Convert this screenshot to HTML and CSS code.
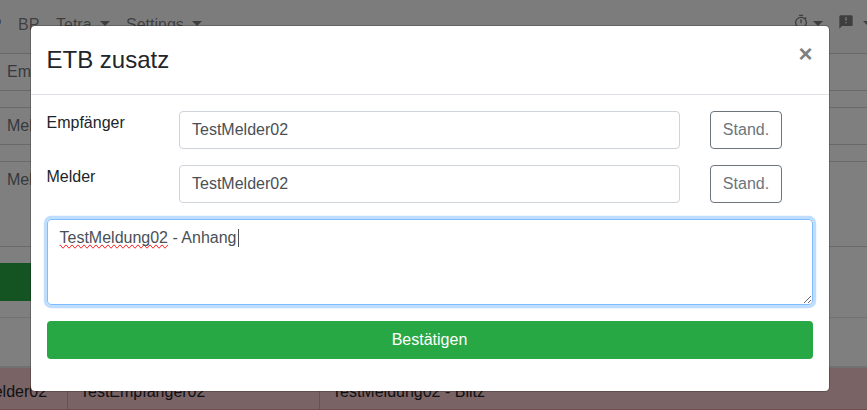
FILE: index.html
```html
<!DOCTYPE html>
<html lang="de">
<head>
<meta charset="utf-8">
<title>ETB zusatz</title>
<link rel="stylesheet" href="styles.css">
</head>
<body>
<div class="page">
  <nav class="navbar">
    <span class="nav-p">P</span>
    <span class="nav-br">BP</span>
    <span class="nav-tetra">Tetra <i class="caret"></i></span>
    <span>Settings <i class="caret"></i></span>
    <span class="nav-right">
      <svg class="icon" viewBox="0 0 24 24"><path d="M15 1H9v2h6V1zm-4 13h2V8h-2v6zm8.030-6.610l1.420-1.420c-.43-.51-.9-.99-1.410-1.410l-1.420 1.420A8.962 8.962 0 0 0 12 4a9 9 0 1 0 7.030 3.390zM12 20c-3.870 0-7-3.130-7-7s3.130-7 7-7 7 3.130 7 7-3.130 7-7 7z"/></svg>
      <i class="caret caret-near"></i>
      <svg class="icon icon-feedback" viewBox="0 0 24 24"><path d="M20 2H4c-1.100 0-2 .9-2 2v18l4-4h14c1.100 0 2-.9 2-2V4c0-1.100-.9-2-2-2zm-7 12h-2v-2h2v2zm0-4h-2V5h2v5z"/></svg>
      <i class="caret caret-last"></i>
    </span>
  </nav>
  <div class="field">Empfänger</div>
  <div class="field">Melder</div>
  <div class="field field-area">Meldung</div>
  <div class="submit"></div>
  <div class="rule"></div>
  <div class="table-row">
    <div class="cell cell-melder">TestMelder02</div>
    <div class="cell cell-empf">TestEmpfänger02</div>
    <div class="cell">TestMeldung02 - Blitz</div>
  </div>
</div>
<div class="backdrop">
  <section class="modal">
    <header class="modal-header">
      <h4>ETB zusatz</h4>
      <span class="close">×</span>
    </header>
    <div class="modal-body">
      <div class="row">
        <span class="label">Empfänger</span>
        <div class="input">TestMelder02</div>
        <div class="btn-outline">Stand.</div>
      </div>
      <div class="row">
        <span class="label">Melder</span>
        <div class="input">TestMelder02</div>
        <div class="btn-outline">Stand.</div>
      </div>
      <div class="textarea"><span class="misspelled">TestMeldung02</span> - Anhang<i class="cursor"></i></div>
      <div class="btn-confirm">Bestätigen</div>
    </div>
  </section>
</div>
</body>
</html>
```
FILE: styles.css
```css
* { box-sizing: border-box; }
body {
  margin: 0;
  height: 410px;
  overflow: hidden;
  position: relative;
  background: #fff;
  color: #212529;
  font: 16px/24px "Liberation Sans", Arial, sans-serif;
}
.page { height: 410px; overflow: hidden; }
.navbar {
  display: flex;
  height: 53px;
  padding-top: 13px;
  background: #f8f9fa;
  color: rgba(0, 0, 0, .5);
  white-space: nowrap;
}
.nav-p { width: 27px; margin-left: -9px; }
.nav-br { width: 38px; }
.nav-tetra { width: 70px; }
.caret {
  display: inline-block;
  margin-left: 4px;
  vertical-align: 4px;
  border-top: 5px solid;
  border-left: 5px solid transparent;
  border-right: 5px solid transparent;
}
.nav-right {
  display: flex;
  align-items: flex-start;
  margin-left: auto;
  width: 74px;
}
.icon { width: 16px; height: 16px; flex: none; margin-top: 1px; fill: currentColor; }
.caret-near { margin: 8px 0 0 4px; }
.icon-feedback { margin-left: 15px; }
.caret-last { margin: 8px 0 0 9px; flex: none; }
.field {
  height: 38px;
  margin: 0 -6px 16px;
  padding: 6px 12px;
  border: 1px solid #ced4da;
  color: #6c757d;
}
.field-area { height: 86px; }
.submit { width: 420px; height: 38px; background: #28a745; }
.rule { height: 51px; margin-top: 16px; border-top: 1px solid rgba(0, 0, 0, .1); border-bottom: 2px solid #dee2e6; }
.table-row { display: flex; height: 42px; background: #f5c6cb; border-bottom: 1px solid #ed969e; }
.cell { padding: 12px; }
.cell + .cell { border-left: 1px solid #ed969e; }
.cell-melder { width: 112px; margin-left: -45px; padding-left: 0; text-indent: -4px; }
.cell-empf { width: 252px; }
.backdrop {
  position: absolute;
  inset: 0;
  padding: 25px 37px 0 30px;
  background: rgba(0, 0, 0, .5);
}
.modal {
  width: 800px;
  height: 367px;
  background: #fff;
  background-clip: padding-box;
  border: 1px solid rgba(0, 0, 0, .2);
  border-radius: 5px;
}
.modal-header {
  display: flex;
  justify-content: space-between;
  height: 69px;
  padding: 16px 16.5px 16px 15.5px;
  border-bottom: 1px solid #dee2e6;
}
h4 { margin: 0; font-size: 24px; line-height: 36px; font-weight: 500; }
.close { font-size: 24px; line-height: 24px; font-weight: 700; color: #7f7f7f; }
.modal-body { padding: 16px; }
.row { display: flex; height: 38px; margin-bottom: 16px; }
.label { width: 132px; text-indent: -.5px; }
.input, .textarea {
  padding: 6px 12px;
  border: 1px solid #ced4da;
  border-radius: 4px;
  color: #495057;
}
.input { width: 501px; margin-right: 30px; }
.btn-outline {
  width: 72px;
  padding: 6px 0;
  border: 1px solid #6c757d;
  border-radius: 4px;
  color: #6c757d;
  text-align: center;
}
.textarea {
  height: 86px;
  margin-bottom: 16px;
  padding-left: 11.5px;
  overflow: hidden;
  resize: vertical;
  border-color: #80bdff;
  box-shadow: 0 0 0 3.2px rgba(0, 123, 255, .25);
}
.misspelled { text-decoration-line: spelling-error; }
.cursor { display: inline-block; width: 1px; height: 18px; margin-left: 1px; background: #495057; vertical-align: -4px; }
.btn-confirm {
  height: 38px;
  padding: 7px 8px 7px 7px;
  border-radius: 4px;
  background: #28a745;
  color: #fff;
  text-align: center;
}
```
